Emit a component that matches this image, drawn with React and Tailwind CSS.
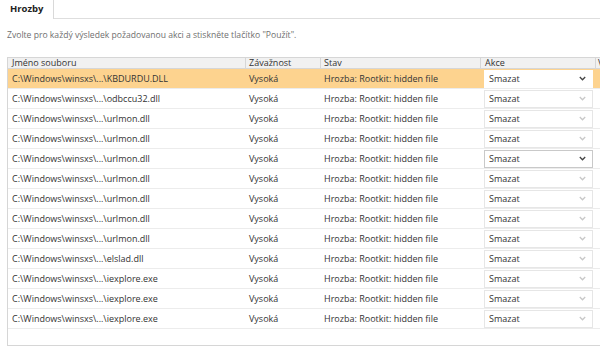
const rows = [
  "C:\\Windows\\winsxs\\...\\KBDURDU.DLL",
  "C:\\Windows\\winsxs\\...\\odbccu32.dll",
  "C:\\Windows\\winsxs\\...\\urlmon.dll",
  "C:\\Windows\\winsxs\\...\\urlmon.dll",
  "C:\\Windows\\winsxs\\...\\urlmon.dll",
  "C:\\Windows\\winsxs\\...\\urlmon.dll",
  "C:\\Windows\\winsxs\\...\\urlmon.dll",
  "C:\\Windows\\winsxs\\...\\urlmon.dll",
  "C:\\Windows\\winsxs\\...\\urlmon.dll",
  "C:\\Windows\\winsxs\\...\\elslad.dll",
  "C:\\Windows\\winsxs\\...\\iexplore.exe",
  "C:\\Windows\\winsxs\\...\\iexplore.exe",
  "C:\\Windows\\winsxs\\...\\iexplore.exe",
];

function Chevron({ dark }) {
  return (
    <svg width="7" height="5" viewBox="0 0 7 5" className="shrink-0">
      <polyline
        points="0.8,1 3.5,3.8 6.2,1"
        fill="none"
        stroke={dark ? "#444" : "#c8c8c8"}
        strokeWidth="1.3"
      />
    </svg>
  );
}

function Select({ active, focus }) {
  return (
    <div
      className={`ml-[3px] w-[109px] h-[18px] bg-white flex items-center justify-between pl-[4px] pr-[6px] border ${
        focus ? "border-white" : active ? "border-[#c9c9c9]" : "border-[#e6e6e6]"
      }`}
    >
      <span>Smazat</span>
      <Chevron dark={active || focus} />
    </div>
  );
}

export default function App() {
  return (
    <div
      className="w-[600px] h-[356px] overflow-hidden bg-white text-[#333] text-[9px]"
      style={{ fontFamily: '"Open Sans", sans-serif' }}
    >
      {/* tab bar */}
      <div className="flex h-[19px]">
        <div className="w-[54px] h-[19px] border-r border-[#d9d9d9] flex items-center pl-[10px] font-bold text-[9.5px] text-[#222] bg-white">
          Hrozby
        </div>
        <div className="flex-1 border-b border-[#dedede]" />
      </div>

      <div className="pl-[7px] pt-[10px] h-[38px] text-[#6f6f6f] text-[8.6px]">
        Zvolte pro každý výsledek požadovanou akci a stiskněte tlačítko "Použít".
      </div>

      {/* table */}
      <div className="ml-[7px] w-[640px] h-[289px] border-l border-b border-[#d6d6d6] flex flex-col">
        <div className="flex h-[12px] border-t border-b border-[#d6d6d6] bg-[#f1f1f1] text-[#333] leading-[10px]">
          <div className="w-[238px] pl-[4px] border-r border-[#d6d6d6]">Jméno souboru</div>
          <div className="w-[75px] pl-[3px] border-r border-[#d6d6d6]">Závažnost</div>
          <div className="w-[160px] pl-[3px] border-r border-[#d6d6d6]">Stav</div>
          <div className="w-[115px] pl-[4px] border-r border-[#d6d6d6]">Akce</div>
          <div className="flex-1 pl-[2px]">V</div>
        </div>
        {rows.map((name, i) => (
          <div
            key={i}
            className={`flex items-center h-[20px] shrink-0 border-b border-[#ececec] ${
              i === 0 ? "bg-[#fdd38f]" : "bg-white"
            }`}
          >
            <div className="w-[238px] pl-[4px]">{name}</div>
            <div className="w-[75px] pl-[3px]">Vysoká</div>
            <div className="w-[160px] pl-[3px]">Hrozba: Rootkit: hidden file</div>
            <div className="w-[115px]">
              <Select focus={i === 0} active={i === 4} />
            </div>
          </div>
        ))}
      </div>
    </div>
  );
}
